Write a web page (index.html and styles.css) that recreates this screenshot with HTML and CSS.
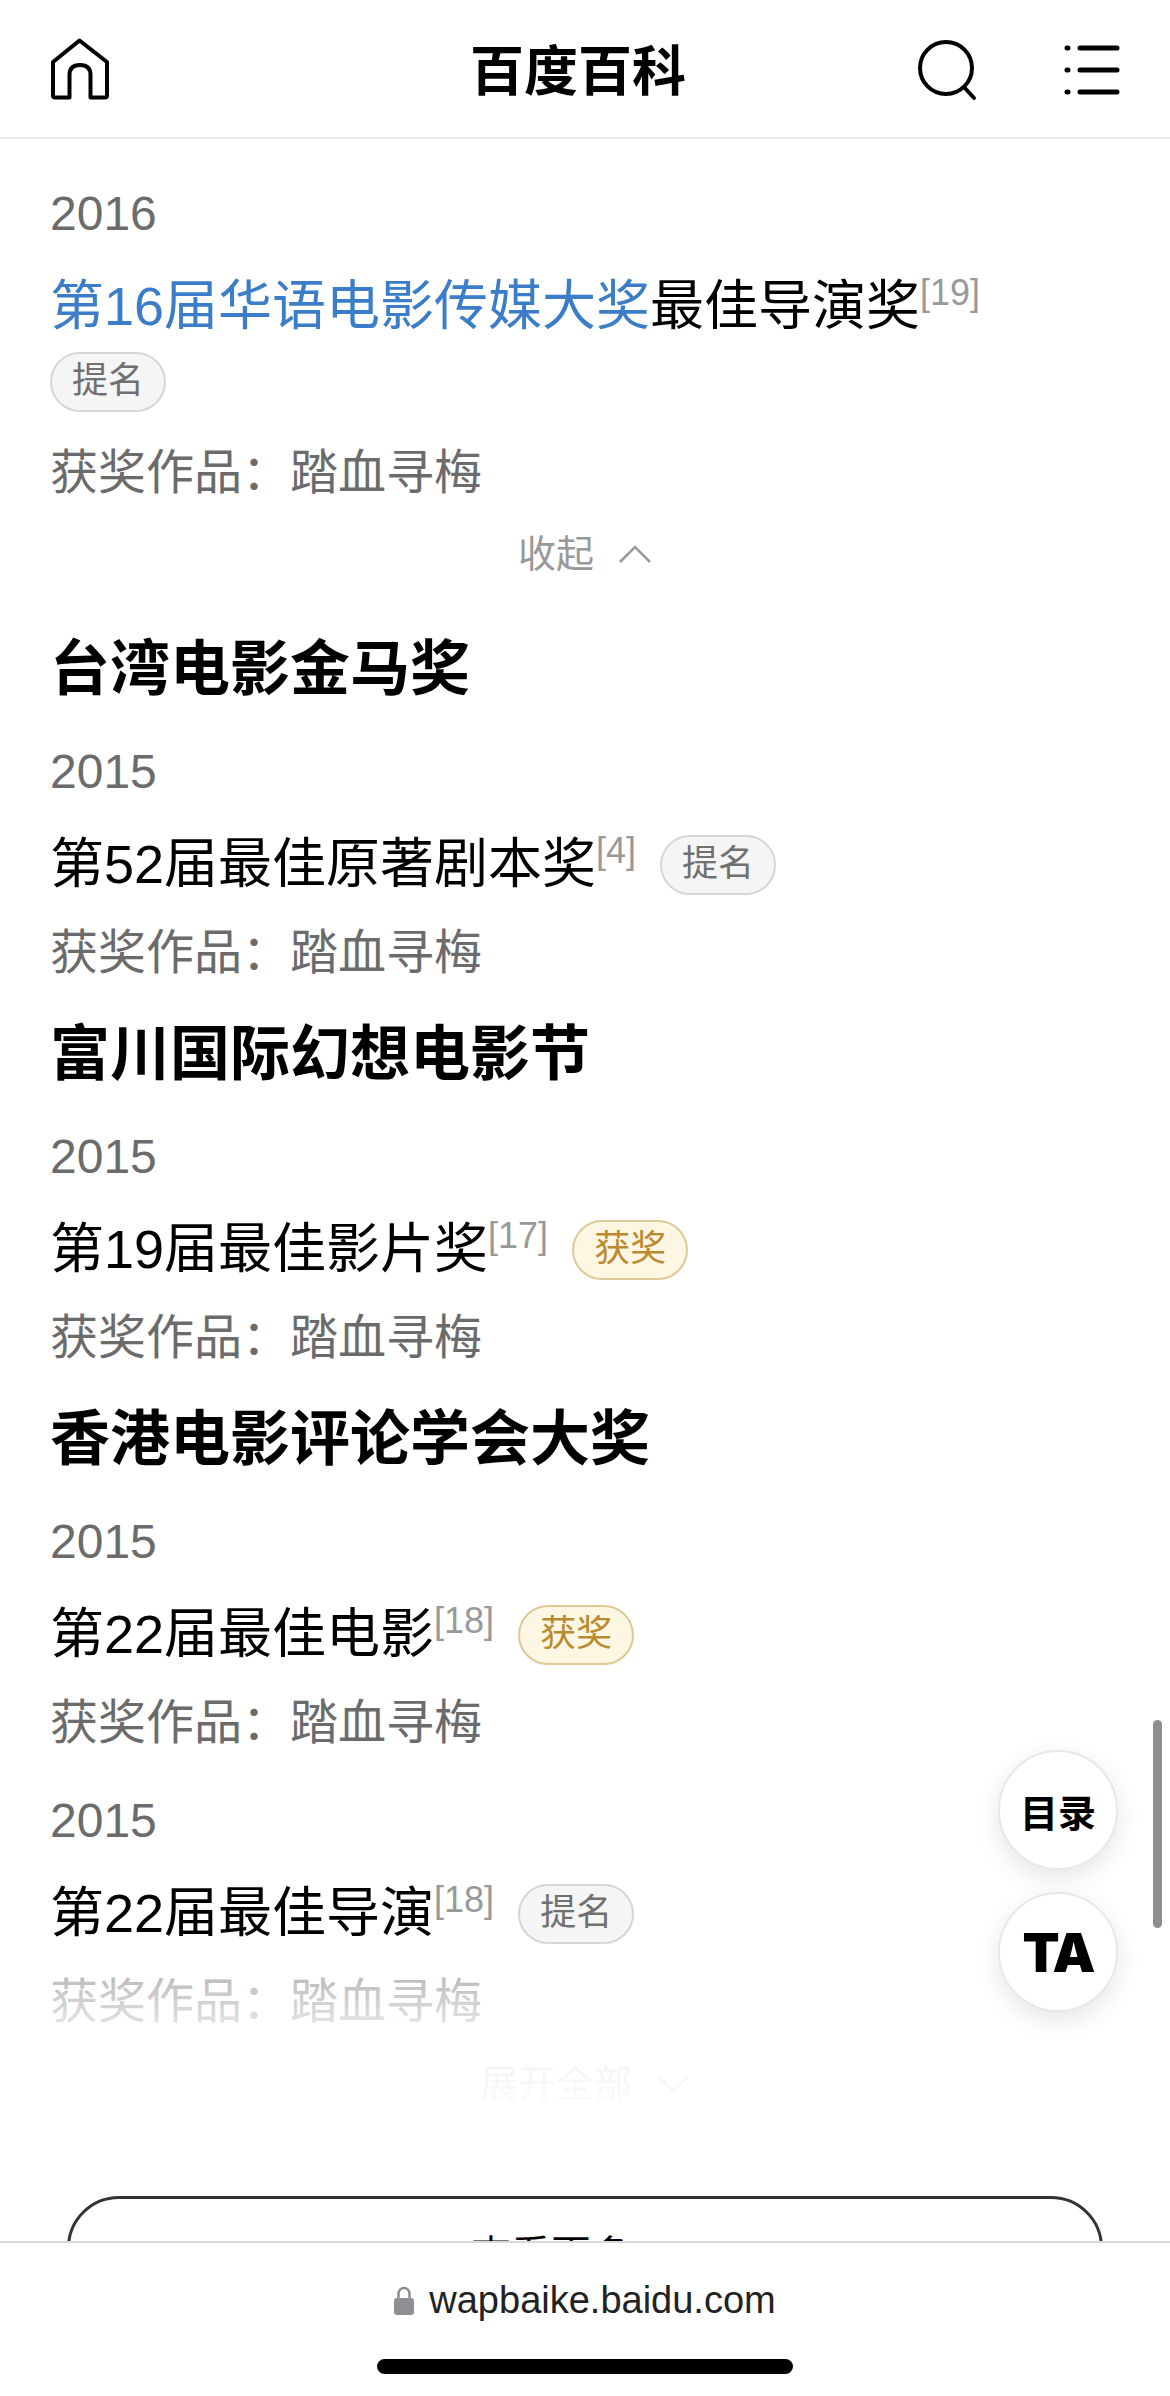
FILE: index.html
```html
<!DOCTYPE html>
<html lang="zh">

<head>
    <meta charset="utf-8">
    <meta name="viewport" content="width=device-width, initial-scale=1">
    <title>百度百科</title>
    <link rel="stylesheet" href="styles.css">
</head>

<body>
    <header class="topBar">
        <svg class="homeIcon" width="60" height="62" viewBox="0 0 60 62" fill="none" stroke="#000" stroke-width="4" stroke-linejoin="round">
            <path d="M29.500 2.500L3 24V57.500Q3 59.500 5 59.500H19.500V37Q19.500 27 30 27Q40.500 27 40.500 37V59.500H55Q57 59.500 57 57.500V24Z" />
        </svg>
        <div class="topTitle">百度百科</div>
        <div class="topTools">
            <svg width="60" height="62" viewBox="0 0 60 62" fill="none" stroke="#000" stroke-width="4" stroke-linecap="round">
                <circle cx="28" cy="29" r="26" />
                <path d="M46 48L56 59" />
            </svg>
            <svg width="56" height="54" viewBox="0 0 56 54" fill="none" stroke="#000" stroke-width="5" stroke-linecap="round">
                <path d="M16 5H53M16 27H53M16 49H53" />
                <path d="M3 5H4M3 27H4M3 49H4" />
            </svg>
        </div>
    </header>

    <main class="content">
        <div class="award first">
            <div class="year">2016</div>
            <div class="awardName"><a href="#">第16届华语电影传媒大奖</a>最佳导演奖<sup>[19]</sup> <span class="tag nominee wrapped">提名</span></div>
            <div class="work">获奖作品：踏血寻梅</div>
        </div>
        <div class="foldRow">
            <span>收起</span>
            <svg width="34" height="18" viewBox="0 0 34 18" fill="none" stroke="#999" stroke-width="2.500"><path d="M2 17L17 2L32 17" /></svg>
        </div>

        <h2 class="festival spaced">台湾电影金马奖</h2>
        <div class="award first">
            <div class="year">2015</div>
            <div class="awardName">第52届最佳原著剧本奖<sup>[4]</sup><span class="tag nominee">提名</span></div>
            <div class="work">获奖作品：踏血寻梅</div>
        </div>

        <h2 class="festival">富川国际幻想电影节</h2>
        <div class="award first">
            <div class="year">2015</div>
            <div class="awardName">第19届最佳影片奖<sup>[17]</sup><span class="tag winner">获奖</span></div>
            <div class="work">获奖作品：踏血寻梅</div>
        </div>

        <h2 class="festival">香港电影评论学会大奖</h2>
        <div class="award first">
            <div class="year">2015</div>
            <div class="awardName">第22届最佳电影<sup>[18]</sup><span class="tag winner">获奖</span></div>
            <div class="work">获奖作品：踏血寻梅</div>
        </div>

        <div class="fadeOut">
            <div class="award first">
                <div class="year">2015</div>
                <div class="awardName">第22届最佳导演<sup>[18]</sup><span class="tag nominee">提名</span></div>
                <div class="work">获奖作品：踏血寻梅</div>
            </div>
            <div class="foldRow more">
                <span>展开全部</span>
                <svg width="34" height="18" viewBox="0 0 34 18" fill="none" stroke="#999" stroke-width="2.500"><path d="M2 1L17 16L32 1" /></svg>
            </div>
        </div>

        <button class="moreBtn">查看更多</button>
    </main>

    <div class="scrollThumb"></div>
    <div class="floatBtn catalog">目录</div>
    <div class="floatBtn taBtn">TA</div>

    <footer class="urlBar">
        <div class="urlText">
            <svg width="20" height="29" viewBox="0 0 20 29">
                <path d="M4.500 13V7.500A5.500 5.500 0 0 1 15.500 7.500V13" fill="none" stroke="#8e8e93" stroke-width="2.500" />
                <rect x="0" y="12" width="20" height="17" rx="3" fill="#8e8e93" />
            </svg>
            <span>wapbaike.baidu.com</span>
        </div>
        <div class="homeBar"></div>
    </footer>
</body>

</html>
```

FILE: styles.css
```css
* {
    box-sizing: border-box;
}

html,
body {
    height: 2396px;
}

body {
    margin: 0;
    position: relative;
    overflow: hidden;
    background: #fff;
    color: #000;
    font-family: "Liberation Sans", "Noto Sans CJK SC", sans-serif;
}

/* Top bar */

.topBar {
    display: grid;
    grid-template-columns: 1fr auto 1fr;
    align-items: center;
    height: 139px;
    padding: 0 50px 0 50px;
    border-bottom: 2px solid #e8e8e8;
}

.topTitle {
    margin: 7px 14px 0 0;
    font-size: 54px;
    font-weight: 700;
    line-height: 78px;
}

.topTools {
    display: flex;
    justify-content: flex-end;
    align-items: center;
    gap: 86px;
    margin-top: 3px;
}

/* Award list */

.content {
    padding: 39px 50px 0;
}

.award {
    margin-top: 26px;
}

.award.first {
    margin-top: 0;
}

.year {
    font-size: 48px;
    line-height: 72px;
    color: #6b6b6b;
}

.awardName {
    margin-top: 17px;
    font-size: 54px;
    line-height: 78px;
}

.awardName a {
    color: #3b7dc8;
    text-decoration: none;
}

.awardName sup {
    font-size: 36px;
    line-height: 0;
    vertical-align: 20px;
    color: #999;
}

.work {
    margin-top: 14px;
    font-size: 48px;
    line-height: 72px;
    color: #6b6b6b;
}

.tag {
    display: inline-block;
    height: 60px;
    margin-left: 24px;
    padding: 0 20px;
    border: 2px solid;
    border-radius: 30px;
    font-size: 36px;
    line-height: 54px;
    vertical-align: 7px;
}

/* No room for it beside the name, it goes on its own line */

.tag.wrapped {
    display: block;
    width: fit-content;
    margin: 7px 0 25px;
}

.nominee {
    background: #f5f5f5;
    border-color: #d6d6d6;
    color: #707070;
}

.winner {
    background: #fdf6e3;
    border-color: #dcc996;
    color: #b98a2f;
}

.festival {
    margin: 24px 0 24px;
    font-size: 60px;
    font-weight: 700;
    line-height: 84px;
}

.festival.spaced {
    margin-top: 44px;
}

.foldRow {
    display: flex;
    justify-content: center;
    align-items: center;
    gap: 24px;
    margin-top: 15px;
    font-size: 38px;
    line-height: 60px;
    color: #999;
}

.foldRow.more {
    margin-top: 16px;
}

/* White fade over the collapsed rows */

.fadeOut {
    position: relative;
    margin-top: 26px;
}

.fadeOut::after {
    content: "";
    position: absolute;
    left: 0;
    right: 0;
    top: 162px;
    bottom: -20px;
    background: linear-gradient(rgba(255, 255, 255, 0), rgba(255, 255, 255, 0.55) 16%, rgba(255, 255, 255, 0.85) 45%, #fff);
}

.moreBtn {
    display: block;
    width: 1036px;
    height: 112px;
    margin: 82px 0 0 17px;
    padding: 0 68px 0 0;
    background: #fff;
    border: 3px solid #333;
    border-radius: 52px;
    color: #000;
    font-family: inherit;
    font-size: 40px;
}

/* Floating things on the right */

.scrollThumb {
    position: absolute;
    left: 1153px;
    top: 1720px;
    width: 9px;
    height: 208px;
    background: #8e8e8e;
    border-radius: 5px;
}

.floatBtn {
    position: absolute;
    left: 998px;
    display: flex;
    justify-content: center;
    align-items: center;
    width: 120px;
    height: 120px;
    background: #fff;
    border: 2px solid #e8e8e8;
    border-radius: 50%;
    box-shadow: 0 8px 24px rgba(0, 0, 0, 0.1);
}

.catalog {
    top: 1750px;
    font-size: 38px;
    font-weight: 700;
}

.taBtn {
    top: 1892px;
    font-family: Inter, sans-serif;
    font-size: 54px;
    font-weight: 900;
    letter-spacing: -2px;
}

/* Browser address bar */

.urlBar {
    position: absolute;
    left: 0;
    right: 0;
    bottom: 0;
    height: 155px;
    background: #fff;
    border-top: 2px solid #d8d8d8;
}

.urlText {
    display: flex;
    justify-content: center;
    align-items: center;
    gap: 15px;
    margin-top: 32px;
    font-size: 38px;
    line-height: 50px;
    color: #222;
}

.homeBar {
    width: 416px;
    height: 15px;
    margin: 34px auto 0;
    background: #000;
    border-radius: 8px;
}
```
